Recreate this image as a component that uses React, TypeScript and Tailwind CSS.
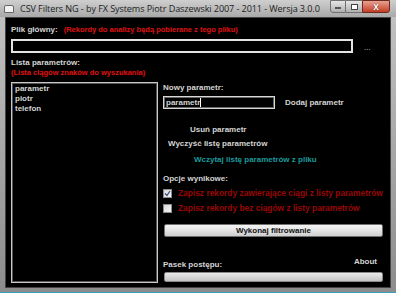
import React from "react";

const lbl = "font-bold text-[#d4d4d4] text-[8px] leading-[10px]";
const red = "font-bold text-[#e01010] text-[7.5px] leading-[10px]";

function Check({ checked }: { checked: boolean }) {
  return (
    <div className="w-[9px] h-[9px] border border-[#8a8a8a] bg-gradient-to-br from-[#d8d8d8] to-[#f4f4f4] flex items-center justify-center">
      {checked && (
        <svg width="7" height="7" viewBox="0 0 7 7">
          <path d="M1 3.5 L3 5.5 L6 1" stroke="#3a4f8a" strokeWidth="1.3" fill="none" />
        </svg>
      )}
    </div>
  );
}

export default function App() {
  return (
    <div
      className="w-[396px] h-[293px] flex flex-col bg-gradient-to-b from-[#c4c4c4] to-[#8c8c8c] border-b border-[#3aa0b8] overflow-hidden"
      style={{ fontFamily: '"Liberation Sans", Arial, sans-serif' }}
    >
      {/* title bar */}
      <div className="h-[17px] flex items-center relative bg-gradient-to-b from-[#cfcfcf] to-[#a9a9a9]">
        <div className="ml-[4px] w-[10px] h-[8px] border border-[#666] bg-[#f2f2f2] rounded-t-[2px]" />
        <div
          className="ml-[6px] text-[9.1px] text-[#1c1c1c] whitespace-nowrap tracking-[-0.1px]"
          style={{ fontFamily: '"Open Sans", "Noto Sans", sans-serif' }}
        >
          CSV Filters NG - by FX Systems Piotr Daszewski 2007 - 2011 - Wersja 3.0.0
        </div>
        <div className="ml-auto mr-[6px] self-start flex">
          <div className="w-[16px] h-[13px] border border-[#707070] rounded-bl-[3px] bg-gradient-to-b from-[#e6e6e6] to-[#b0b0b0] flex items-end justify-center pb-[3px]">
            <div className="w-[6px] h-[2px] bg-white border border-[#555]" />
          </div>
          <div className="w-[16px] h-[13px] border-y border-[#707070] bg-gradient-to-b from-[#e6e6e6] to-[#b0b0b0] flex items-center justify-center">
            <div className="w-[7px] h-[6px] border border-[#444] bg-white" />
          </div>
          <div className="w-[28px] h-[13px] border border-[#6a2a20] rounded-br-[3px] bg-gradient-to-b from-[#e8a090] to-[#c23a22] flex items-center justify-center">
            <span className="text-white text-[10px] font-bold leading-none" style={{ textShadow: "0 0 1px #400" }}>x</span>
          </div>
        </div>
      </div>

      {/* client */}
      <div className="flex-1 mx-[5px] mb-[4px] bg-black border border-[#444] flex flex-col pl-[5px]">
        <div className="mt-[7px] flex items-center gap-[6px] h-[10px]">
          <span className={lbl}>Plik główny:</span>
          <span className={red}>(Rekordy do analizy będą pobierane z tego pliku)</span>
        </div>
        <div className="mt-[4px] flex items-center">
          <div className="w-[342px] h-[14px] border-2 border-[#e4e4e4] bg-black" />
          <span className="ml-[11px] text-[#cfcfcf] text-[8px] leading-[8px] mt-[4px]">...</span>
        </div>
        <div className={`mt-[5px] ${lbl}`}>Lista parametrów:</div>
        <div className={`mt-[0px] ${red}`}>(Lista ciągów znaków do wyszukania)</div>

        <div className="mt-[4px] flex">
          {/* listbox */}
          <div className="w-[147px] h-[201px] border border-[#c8c8c8] shadow-[inset_0_0_0_1px_#555] pt-[1px] pl-[3px]">
            <div className={lbl + " leading-[9px]"}>parametr</div>
            <div className={lbl + " leading-[9px]"}>piotr</div>
            <div className={lbl + " leading-[9px]"}>telefon</div>
          </div>

          {/* right column */}
          <div className="ml-[5px] w-[220px] flex flex-col">
            <div className={`mt-[1px] ${lbl}`}>Nowy parametr:</div>
            <div className="mt-[3px] flex items-center">
              <div className="w-[112px] h-[13px] border border-[#d8d8d8] shadow-[inset_0_0_0_1px_#666] flex items-center pl-[2px]">
                <span className={lbl}>parametr</span>
                <span className="w-[1px] h-[9px] bg-white" />
              </div>
              <span className={`ml-[10px] ${lbl}`}>Dodaj parametr</span>
            </div>
            <div className={`mt-[16px] ml-[27px] ${lbl}`}>Usuń parametr</div>
            <div className={`mt-[4px] ml-[5px] ${lbl}`}>Wyczyść listę parametrów</div>
            <div className={`mt-[6px] ml-[31px] font-bold text-[#1c9a9a] text-[8px] leading-[10px]`}>
              Wczytaj listę parametrów z pliku
            </div>
            <div className={`mt-[9px] ${lbl}`}>Opcje wynikowe:</div>
            <div className="mt-[4px] flex items-center gap-[6px] h-[10px]">
              <Check checked />
              <span className="font-bold text-[#9a0606] text-[8.4px] leading-[10px] whitespace-nowrap">
                Zapisz rekordy zawierające ciągi z listy parametrów
              </span>
            </div>
            <div className="mt-[5px] flex items-center gap-[6px] h-[10px]">
              <Check checked={false} />
              <span className="font-bold text-[#9a0606] text-[8.4px] leading-[10px] whitespace-nowrap">
                Zapisz rekordy bez ciągów z listy parametrów
              </span>
            </div>
            <div className="mt-[11px] ml-[1px] w-[219px] h-[13px] border border-[#707070] rounded-[2px] bg-gradient-to-b from-[#f4f4f4] via-[#e4e4e4] to-[#cfcfcf] flex items-center justify-center">
              <span className="font-bold text-[#111] text-[8px] leading-none">Wykonaj filtrowanie</span>
            </div>
            <div className="mt-[20px] flex items-start">
              <span className={`mt-[3px] ${lbl}`}>Pasek postępu:</span>
              <span className={`ml-auto mr-[6px] ${lbl}`}>About</span>
            </div>
            <div className="mt-[2px] ml-[1px] w-[219px] h-[10px] border border-[#8a8a8a] rounded-[2px] bg-gradient-to-b from-[#eaeaea] to-[#c4c4c4]" />
          </div>
        </div>
      </div>
    </div>
  );
}
